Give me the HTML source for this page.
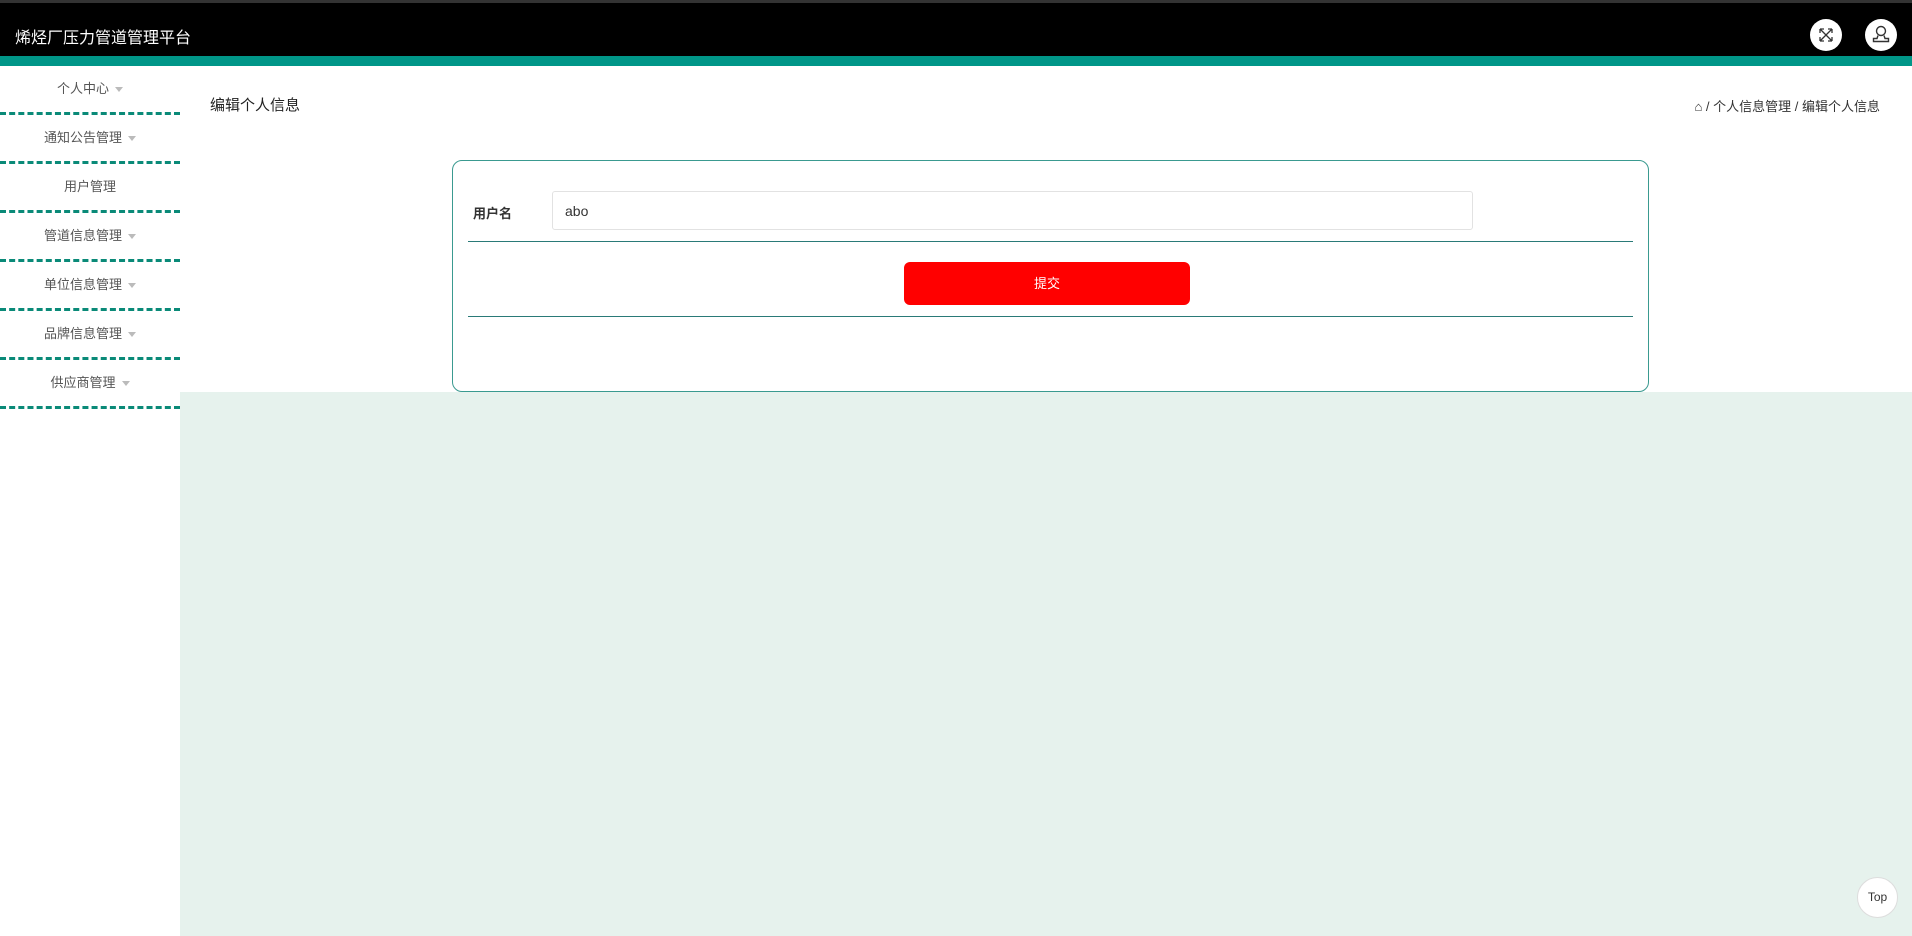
<!DOCTYPE html>
<html><head><meta charset="utf-8"><style>
*{margin:0;padding:0;box-sizing:border-box}
body{width:1912px;height:936px;overflow:hidden;background:#fff;font-family:"Liberation Sans","Noto Sans CJK SC",sans-serif;position:relative}
.top{position:absolute;left:0;top:0;width:1912px;height:56px;background:#000;border-top:3px solid #333}
.teal{position:absolute;left:0;top:56px;width:1912px;height:10px;background:#009688}
.title{position:absolute;left:15px;top:24px;color:#fff;font-size:16px}
.ic{position:absolute;top:19px;width:32px;height:32px;border-radius:50%;background:#fff}
.side{position:absolute;left:0;top:66px;width:180px}
.side div{height:49px;line-height:46px;text-align:center;font-size:13px;color:#555;border-bottom:3px dashed #0a8a78}
.side div span{display:inline-block;margin-left:6px;border:4px solid transparent;border-top:5px solid #bbb;vertical-align:middle;margin-top:3px}
.green{position:absolute;left:180px;top:392px;width:1732px;height:544px;background:#e6f2ed}
.h{position:absolute;left:210px;top:94px;font-size:15px;color:#222}
.bc{position:absolute;right:32px;top:96px;font-size:13px;color:#333}
.card{position:absolute;left:452px;top:160px;width:1197px;height:232px;border:1px solid #3a9a90;border-radius:10px;background:#fff}
.lbl{position:absolute;left:473px;top:203px;font-size:13px;font-weight:bold;color:#333}
.inp{position:absolute;left:552px;top:191px;width:921px;height:39px;border:1px solid #e2e2e2;border-radius:3px;font-size:14px;color:#333;padding:11px 12px}
.line{position:absolute;left:468px;width:1165px;height:1px;background:#2a7a78}
.btn{position:absolute;left:904px;top:262px;width:286px;height:43px;background:#f00;border-radius:6px;color:#fff;font-size:13px;text-align:center;line-height:43px}
.topb{position:absolute;left:1857px;top:877px;width:41px;height:41px;border-radius:50%;background:#fff;border:1px solid #ddd;font-size:12px;text-align:center;line-height:39px;color:#333}
</style></head><body>
<div class="top"></div><div class="teal"></div>
<div class="title">烯烃厂压力管道管理平台</div>
<div class="ic" style="left:1810px"><svg width="32" height="32" viewBox="0 0 32 32" fill="none" stroke="#333" stroke-width="1.3"><path d="M10 10l12 12M22 10l-12 12M10 10h4M10 10v4M22 10h-4M22 10v4M10 22h4M10 22v-4M22 22h-4M22 22v-4"/></svg></div>
<div class="ic" style="left:1865px"><svg width="32" height="32" viewBox="0 0 32 32" fill="none" stroke="#333" stroke-width="1.4"><circle cx="16" cy="12" r="4.5"/><path d="M13 16.5l-1 3H8.5v3h15v-3H20l-1-3"/></svg></div>
<div class="side">
<div>个人中心<span></span></div>
<div>通知公告管理<span></span></div>
<div>用户管理</div>
<div>管道信息管理<span></span></div>
<div>单位信息管理<span></span></div>
<div>品牌信息管理<span></span></div>
<div>供应商管理<span></span></div>
</div>
<div class="green"></div>
<div class="h">编辑个人信息</div>
<div class="bc">⌂ / 个人信息管理 / 编辑个人信息</div>
<div class="card"></div>
<div class="lbl">用户名</div>
<div class="inp">abo</div>
<div class="line" style="top:241px"></div>
<div class="btn">提交</div>
<div class="line" style="top:316px"></div>
<div class="topb">Top</div>
</body></html>
